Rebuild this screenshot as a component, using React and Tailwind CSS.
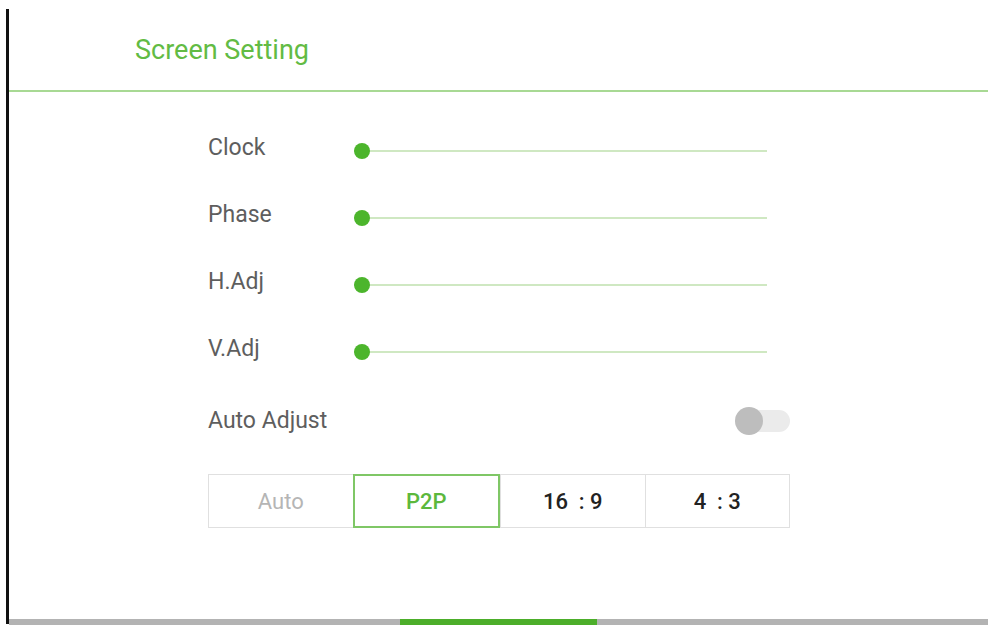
const font = { fontFamily: "Roboto, 'Liberation Sans', sans-serif" };

const sliders = ["Clock", "Phase", "H.Adj", "V.Adj"];
const modes = ["Auto", "P2P", "16  : 9", "4  : 3"];

function Slider() {
  return (
    <div className="relative flex items-center w-[413px] h-[16px] mt-[5px]">
      <div className="h-[2px] w-full bg-[#cfe8c2]" />
      <div className="absolute left-0 w-[16px] h-[16px] rounded-full bg-[#4cb52c]" />
    </div>
  );
}

export default function App() {
  return (
    <div className="w-[995px] h-[629px] bg-white pt-[9px] pl-[6px] overflow-hidden" style={font}>
      <div className="flex flex-col h-[615px] border-l-[3px] border-[#111]">
        {/* header */}
        <div className="h-[81px] flex items-center pl-[126px] pt-[1px]">
          <span className="text-[27px] text-[#62bb44]">Screen Setting</span>
        </div>
        <div className="h-[2px] w-[979px] bg-[#a8d994]" />

        {/* settings */}
        <div className="flex flex-col pl-[199px] pt-[23px]">
          {sliders.map((name) => (
            <div key={name} className="h-[67px] flex items-center">
              <span className="w-[146px] text-[23px] text-[#5e5e5e]">{name}</span>
              <Slider />
            </div>
          ))}

          <div className="h-[76px] flex items-center w-[582px] justify-between">
            <span className="text-[23px] text-[#5e5e5e] mt-[1px]">Auto Adjust</span>
            <div className="relative w-[55px] h-[28px] flex items-center">
              <div className="absolute right-0 w-[44px] h-[22px] rounded-full bg-[#ebebeb]" />
              <div className="absolute left-0 w-[28px] h-[28px] rounded-full bg-[#bdbdbd]" />
            </div>
          </div>

          <div className="mt-[15px] flex w-[582px] h-[54px] border border-[#e0e0e0]">
            {modes.map((m, i) => (
              <div
                key={m}
                className={
                  "flex-1 flex items-center justify-center text-[22px] whitespace-pre " +
                  (i === 0
                    ? "text-[#b5b5b5]"
                    : i === 1
                    ? "text-[#5cb83c] font-medium border-2 border-[#7fc766] -my-px"
                    : "text-[#222] font-medium border-l border-[#e0e0e0]")
                }
              >
                {m}
              </div>
            ))}
          </div>
        </div>

        {/* scroll indicator */}
        <div className="mt-auto mb-[-1px] h-[6px] w-[979px] bg-[#b3b3b3] flex">
          <div className="ml-[391px] w-[197px] h-full bg-[#4cae2a]" />
        </div>
      </div>
    </div>
  );
}
